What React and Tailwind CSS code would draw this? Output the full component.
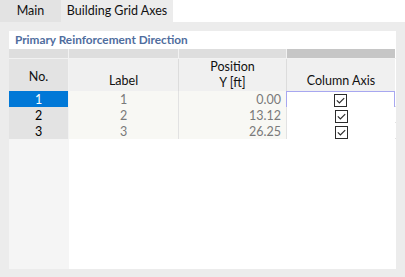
import React from 'react';

const rows = [
    { no: 1, label: '1', y: '0.00', selected: true },
    { no: 2, label: '2', y: '13.12' },
    { no: 3, label: '3', y: '26.25' },
];

const Check = () => (
    <svg width="13" height="13" viewBox="0 0 13 13">
        <rect x="0.5" y="0.5" width="12" height="12" fill="white" stroke="#2b2b2b" />
        <path d="M2.8 6.3 L5.4 8.9 L10.2 4.1" fill="none" stroke="#2b2b2b" strokeWidth="1.2" />
    </svg>
);

const App = () => {
    const cols = 'grid grid-cols-[60px_109px_108px_109px]';
    return (
        <div className="w-[405px] h-[277px] flex flex-col bg-white text-[12.5px] text-[#111]" style={{ fontFamily: 'Lato, "Open Sans", sans-serif' }}>
            {/* Tabs */}
            <div className="flex h-[22px]">
                <div className="w-[61px] bg-[#e3e3e3] flex items-center justify-center pt-[1px]">Main</div>
                <div className="w-[112px] bg-[#ececec] flex items-center justify-center pt-[1px]">Building Grid Axes</div>
            </div>
            <div className="flex-1 bg-[#ececec] px-[9px] pt-[9px] pb-[8px]">
                <div className="h-full bg-white flex flex-col">
                    <div className="h-[18px] px-[6px] flex items-center font-bold text-[#4f6d9e] text-[11.8px]">
                        Primary Reinforcement Direction
                    </div>
                    {/* group header */}
                    <div className={`${cols} h-[9px]`}>
                        <div className="bg-[#dedede] border-r border-[#f2f2f2]" />
                        <div className="bg-[#dedede]" />
                        <div className="bg-[#dedede] border-l border-[#f2f2f2]" />
                        <div className="bg-[#c6c6c6] border-l border-[#f2f2f2]" />
                    </div>
                    {/* column header */}
                    <div className={`${cols} h-[33px] text-[12.5px] border-t border-[#f2f2f2]`}>
                        <div className="bg-[#e3e3e3] border-r border-[#f2f2f2] flex items-center justify-center pt-[2px]">No.</div>
                        <div className="bg-[#f0f0f0] flex items-end justify-center pb-[2px]">Label</div>
                        <div className="bg-[#f0f0f0] border-l border-[#dcdcdc] flex flex-col items-center justify-end pb-[2px] leading-[16px]">
                            <span>Position</span>
                            <span>Y [ft]</span>
                        </div>
                        <div className="bg-[#f0f0f0] border-l border-[#dcdcdc] flex items-end justify-center pb-[2px]">Column Axis</div>
                    </div>
                    {/* rows */}
                    {rows.map((r) => (
                        <div key={r.no} className={`${cols} h-[16px] text-[12.5px] border-b border-[#e2e2e2]`}>
                            <div className={`${r.selected ? 'bg-[#0078d7] text-white' : 'bg-[#e3e3e3] text-black'} border-r border-[#f2f2f2] flex items-center justify-center`}>{r.no}</div>
                            <div className="bg-[#f8f8f4] text-[#7a7a7a] flex items-center justify-center">{r.label}</div>
                            <div className="bg-[#f8f8f4] text-[#7a7a7a] border-l border-[#e2e2e2] flex items-center justify-end pr-[5px]">{r.y}</div>
                            <div className={`${r.selected ? 'border border-[#a7a7f0]' : 'border-l border-[#e2e2e2]'} bg-white flex items-center justify-center`}>
                                <Check />
                            </div>
                        </div>
                    ))}
                    <div className="flex-1 flex">
                        <div className="w-[60px] bg-[#f5f5f5]" />
                        <div className="flex-1 bg-white" />
                    </div>
                </div>
            </div>
        </div>
    );
};

export default App;
